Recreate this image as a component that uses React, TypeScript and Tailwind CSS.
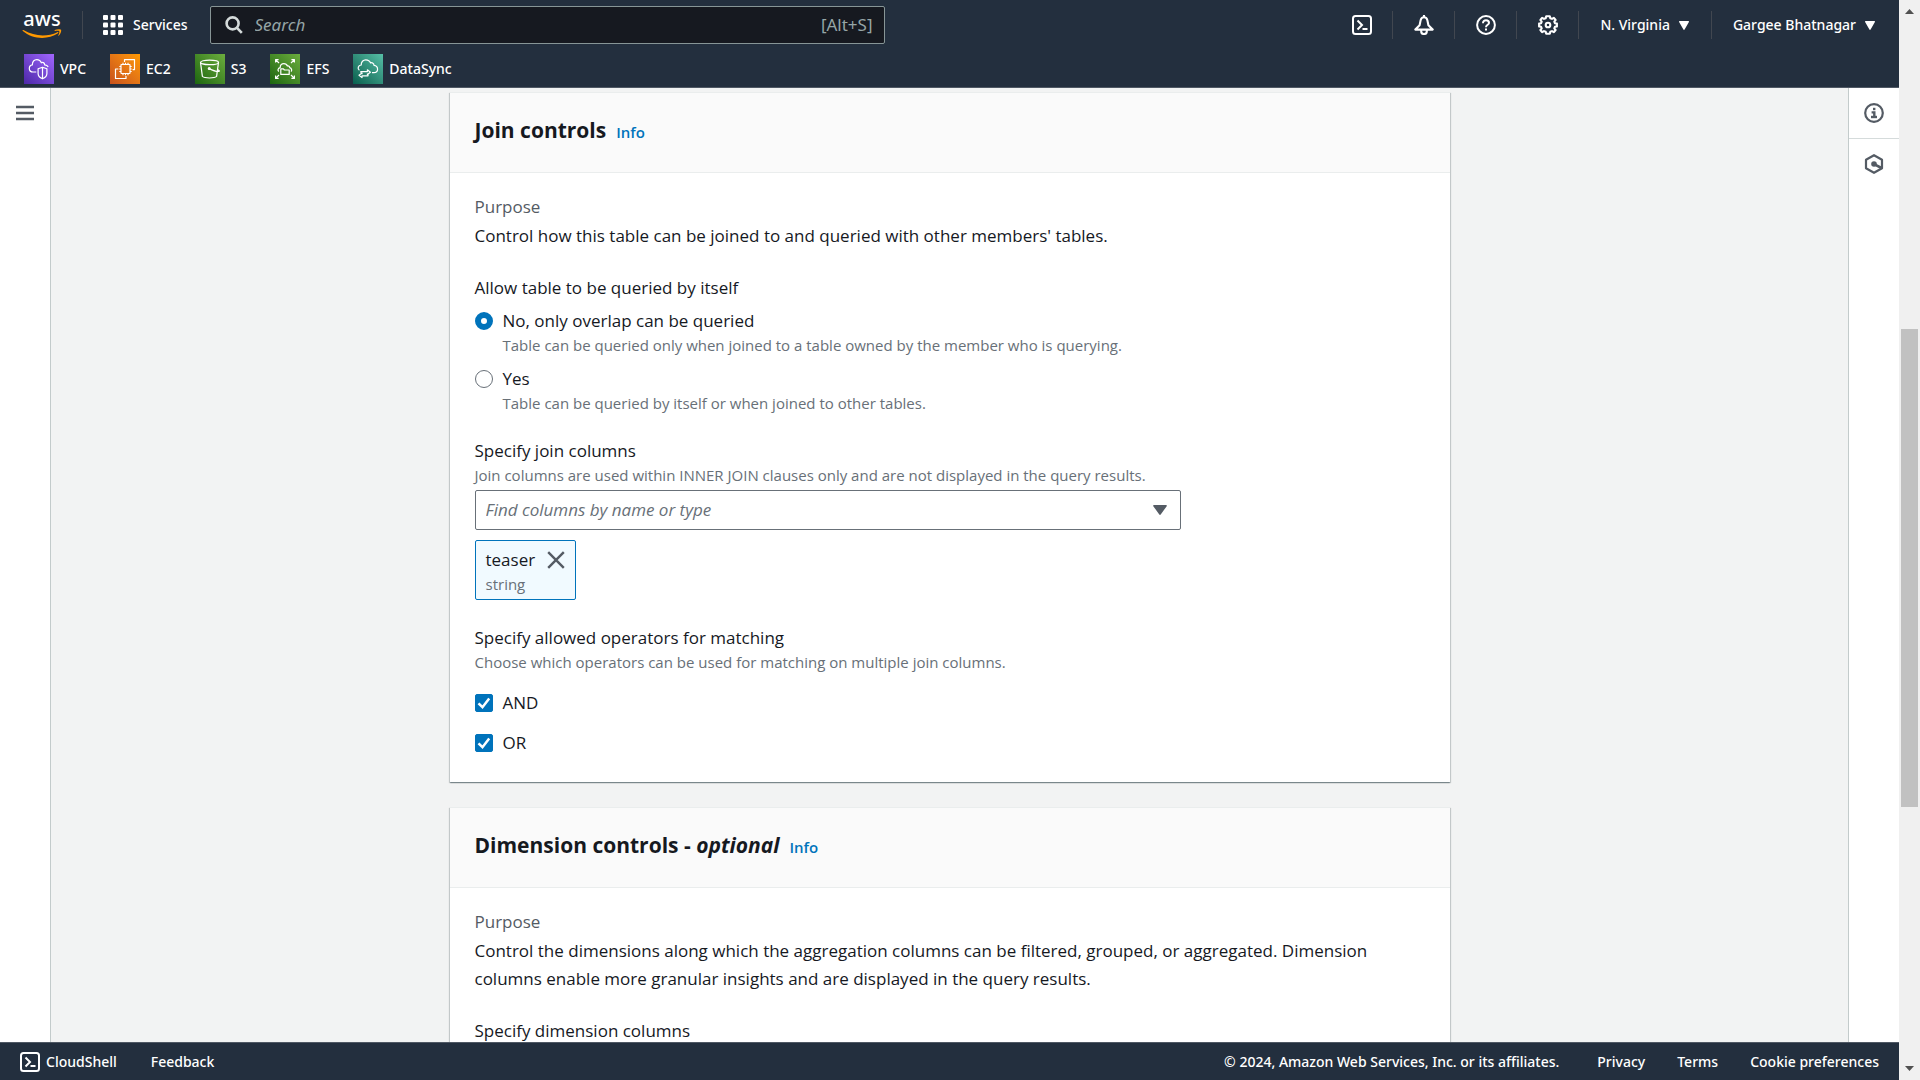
import type { ReactNode } from 'react';

const CHROME_FONT = "font-['Noto_Sans',sans-serif]";
const BODY_FONT = "font-['Open_Sans','Noto_Sans',sans-serif]";

/* ---------- icons ---------- */

function AwsLogo() {
  return (
    <a href="#home" aria-label="AWS home" className="flex w-10 flex-col items-center text-white">
      <span className="text-[20px] leading-4 font-medium">aws</span>
      <svg viewBox="0 0 40 10" className="mt-0.5 h-[10px] w-10" fill="none" aria-hidden="true">
        <path d="M0.6 1.2C0.9 0.8 1.4 0.9 1.9 1.3C12.4 7.6 25.6 7.9 35.3 3.2C36.2 2.8 36.9 3.7 36 4.3C25.5 11.2 10.3 10.2 0.8 2C0.5 1.8 0.4 1.5 0.6 1.2Z" fill="#ff9900" />
        <path d="M32.8 1C34.9 0 38.6 0 39.1 0.8C39.6 1.8 38.6 5.2 36.8 6.8C36.5 7.1 36.2 6.9 36.3 6.5C36.9 5 37.7 2.9 37.3 2.2C36.8 1.5 34.5 1.7 33 1.9C32.5 1.9 32.3 1.3 32.8 1Z" fill="#ff9900" />
      </svg>
    </a>
  );
}

function GridIcon() {
  return (
    <svg viewBox="0 0 20 20" className="size-5" fill="currentColor" aria-hidden="true">
      {[0, 7.5, 15].map((y) =>
        [0, 7.5, 15].map((x) => <rect key={`${x}-${y}`} x={x} y={y} width="5" height="5" rx="1" />),
      )}
    </svg>
  );
}

function SearchIcon() {
  return (
    <svg viewBox="0 0 18 18" className="size-[18px] shrink-0 text-[#d5dbdb]" fill="none" stroke="currentColor" strokeWidth="2.6" aria-hidden="true">
      <circle cx="7.6" cy="7.4" r="6" />
      <path d="M12 11.8L16.8 16.8" />
    </svg>
  );
}

function ShellIcon() {
  return (
    <svg viewBox="0 0 20 20" className="size-5" fill="none" stroke="currentColor" strokeWidth="2" aria-hidden="true">
      <rect x="1" y="1" width="18" height="18" rx="2.5" />
      <path d="M5.5 5.5L10 10L5.5 14.5" />
      <path d="M10.5 14H15.5" />
    </svg>
  );
}

function BellIcon() {
  return (
    <svg viewBox="0 0 20 20" className="size-5" fill="none" stroke="currentColor" strokeWidth="2.1" strokeLinejoin="round" aria-hidden="true">
      <path d="M1.3 14.6L5.6 10.2L6.6 5.4C7 3.4 8.2 2.3 10 2.3C11.8 2.3 13 3.4 13.4 5.4L14.4 10.2L18.7 14.6Z" />
      <path d="M10 0V2.4" />
      <path d="M7.2 14.8V16.2C7.2 17.9 8.4 19 10 19C11.6 19 12.8 17.9 12.8 16.2V14.8" />
    </svg>
  );
}

function HelpIcon() {
  return (
    <svg viewBox="0 0 20 20" className="size-5" fill="none" stroke="currentColor" strokeWidth="2" aria-hidden="true">
      <circle cx="10" cy="10" r="8.9" />
      <path d="M7 8.2C7 6.4 8.3 5.3 10 5.3C11.7 5.3 13 6.4 13 7.9C13 9.7 10 9.8 10 12.2" />
      <path d="M10 13.4V15.6" />
    </svg>
  );
}

function GearIcon() {
  return (
    <svg viewBox="0 0 20 20" className="size-5" fill="none" stroke="currentColor" strokeWidth="2.1" strokeLinejoin="round" aria-hidden="true">
      <path d="M8.2 1.2H11.8L12.3 3.2L14 3.9L15.9 2.8L17.6 5L16.3 6.6L16.9 8.2L18.9 8.6V11.4L16.9 11.8L16.3 13.4L17.6 15L15.9 17.2L14 16.1L12.3 16.8L11.8 18.8H8.2L7.7 16.8L6 16.1L4.1 17.2L2.4 15L3.7 13.4L3.1 11.8L1.1 11.4V8.6L3.1 8.2L3.7 6.6L2.4 5L4.1 2.8L6 3.9L7.7 3.2Z" />
      <circle cx="10" cy="10" r="2.3" />
    </svg>
  );
}

function Caret() {
  return (
    <svg viewBox="0 0 10 9" className="h-[9px] w-[10px] shrink-0" fill="currentColor" aria-hidden="true">
      <path d="M0.6 0H9.4C10 0 10.1 0.5 9.9 0.9L5.6 8.5C5.3 9.1 4.7 9.1 4.4 8.5L0.1 0.9C-0.1 0.5 0 0 0.6 0Z" />
    </svg>
  );
}

function MenuIcon() {
  return (
    <svg viewBox="0 0 18 16" className="h-4 w-[18px]" stroke="currentColor" strokeWidth="2.4" aria-hidden="true">
      <path d="M0 2H18M0 8H18M0 14H18" />
    </svg>
  );
}

function InfoCircleIcon() {
  return (
    <svg viewBox="0 0 20 20" className="size-5" fill="none" stroke="currentColor" strokeWidth="2.2" aria-hidden="true">
      <circle cx="10" cy="10" r="8.8" />
      <path d="M9 6H11.4" strokeWidth="2.4" />
      <path d="M7.6 9.4H10.3V14" strokeWidth="2.4" />
      <path d="M7 14H13" strokeWidth="2.4" />
    </svg>
  );
}

function HexIcon() {
  return (
    <svg viewBox="0 0 20 20" className="size-5" fill="none" stroke="currentColor" strokeWidth="2.2" strokeLinejoin="round" aria-hidden="true">
      <path d="M10 1.2L18 5.7V14.3L10 18.8L2 14.3V5.7Z" />
      <circle cx="10" cy="10" r="2.8" fill="currentColor" stroke="none" />
      <path d="M10.5 10.3L17.5 14" strokeWidth="2.6" />
    </svg>
  );
}

function CloseIcon() {
  return (
    <svg viewBox="0 0 18 18" className="size-[18px]" stroke="currentColor" strokeWidth="2.4" aria-hidden="true">
      <path d="M1.2 1.2L16.8 16.8M16.8 1.2L1.2 16.8" />
    </svg>
  );
}

function Glyph({ children }: { children: ReactNode }) {
  return (
    <svg viewBox="0 0 30 30" className="size-[30px]" fill="none" stroke="white" strokeWidth="1.2" strokeLinejoin="round" aria-hidden="true">
      {children}
    </svg>
  );
}

const favorites: { name: string; tile: string; glyph: ReactNode }[] = [
  {
    name: 'VPC',
    tile: 'from-[#4d27a8] to-[#a166ff]',
    glyph: (
      <>
        <path d="M12.3 18H9.2C6.8 18 5.3 16.4 5.3 14.4C5.3 12.2 6.8 11 8.4 10.8C8.2 7.6 10.2 5.6 12.8 5.6C15 5.6 16.6 6.8 17.3 8.8C18.5 7.9 20.6 8.6 20.7 10.9C22.4 11.1 23.6 11.8 24.2 13" />
        <path d="M18.5 13.2L22.9 14.8V19.4C22.9 22 21.2 23.6 18.5 24.8C15.8 23.6 14.1 22 14.1 19.4V14.8ZM18.5 13.2V24.8" />
      </>
    ),
  },
  {
    name: 'EC2',
    tile: 'from-[#c8511b] to-[#ff9900]',
    glyph: (
      <>
        <path d="M14.5 8V5.6H24.5V15.6H22.6M8.4 15H5.5V24.5H16V22" />
        <rect x="11" y="10.5" width="9" height="9" rx="0.5" />
        <path d="M13 8.8V10.5M15.5 8.8V10.5M18 8.8V10.5M13 19.5V21.2M15.5 19.5V21.2M18 19.5V21.2M9.3 12.5H11M9.3 15H11M9.3 17.5H11M20 12.5H21.7M20 15H21.7M20 17.5H21.7" />
      </>
    ),
  },
  {
    name: 'S3',
    tile: 'from-[#1b660f] to-[#6cae3e]',
    glyph: (
      <>
        <ellipse cx="14.5" cy="8.4" rx="9" ry="2.2" />
        <path d="M5.5 8.4L7.4 22.4C9.8 24.5 19.2 24.5 21.6 22.4L23.5 8.4" />
        <path d="M14.2 14.6C17.5 16.3 21.5 17.8 24 17.4C24.9 17 24 16.2 22.6 15.4" />
        <circle cx="14.2" cy="14.4" r="0.9" />
      </>
    ),
  },
  {
    name: 'EFS',
    tile: 'from-[#1b660f] to-[#6cae3e]',
    glyph: (
      <>
        <path d="M9 9L5.6 5.6M5.6 8.6V5.6H8.6M21 9L24.4 5.6M21.4 5.6H24.4V8.6M9 21L5.6 24.4M5.6 21.4V24.4H8.6M21 21L24.4 24.4M24.4 21.4V24.4H21.4" />
        <path d="M8.8 17.6C7.4 16.6 7.8 14.2 10.2 13.6C10.2 10.8 12 9.6 13.9 9.6C15.8 9.6 16.9 10.6 17.4 12C18.8 11.6 19.6 12.6 19.7 13.7C21.8 14.3 22.2 16.6 21 17.6" />
        <path d="M10.8 20.4V14.8H13.4L14.4 16H19.2V20.4Z" />
      </>
    ),
  },
  {
    name: 'DataSync',
    tile: 'from-[#055f4e] to-[#56c0a7]',
    glyph: (
      <>
        <path d="M6.4 16.2C4.2 14.8 5 11.4 8.2 11C8 8 10.2 5.8 12.8 5.8C15.2 5.8 16.8 7 17.6 9C19.2 8.2 21 9.4 21 11.3C25.8 12 25.8 18.4 20.8 18.6H19" />
        <path d="M7.8 18.8V17.6H14.4V15.8L17.4 18.2L14.4 20.4V19.4M15 20.6V21.8H9V23.6L6 21.2L9 19V20.2" />
      </>
    ),
  },
];

/* ---------- page chrome ---------- */

function IconButton({ label, children }: { label: string; children: ReactNode }) {
  return (
    <button aria-label={label} className="flex h-7 w-[62px] items-center justify-center border-r border-[#414750]">
      {children}
    </button>
  );
}

function TopBar() {
  return (
    <header className={`shrink-0 border-b border-[#4f5864] bg-[#232f3e] pb-[3px] text-sm font-medium text-white ${CHROME_FONT}`}>
      <div className="flex h-[50px] items-center pr-6 pl-[22px]">
        <AwsLogo />
        <span className="mx-5 h-7 w-px bg-[#414750]" />
        <button className="mr-[22px] flex items-center gap-[10px]">
          <GridIcon />
          Services
        </button>
        <label className="flex h-[38px] w-full max-w-[675px] items-center gap-3 rounded-xs border border-[#879596] bg-[#161920] pr-[11px] pl-[14px]">
          <SearchIcon />
          <input
            type="search"
            aria-label="Search"
            placeholder="Search"
            className="min-w-0 flex-1 bg-transparent text-[17px] font-normal outline-none placeholder:text-[#95a5a6] placeholder:italic"
          />
          <span className="text-[17px] font-normal text-[#95a5a6]">[Alt+S]</span>
        </label>
        <div className="ml-auto flex items-center">
          <IconButton label="CloudShell"><ShellIcon /></IconButton>
          <IconButton label="Notifications"><BellIcon /></IconButton>
          <IconButton label="Help"><HelpIcon /></IconButton>
          <IconButton label="Settings"><GearIcon /></IconButton>
          <button className="flex h-7 items-center gap-[9px] border-r border-[#414750] pr-[22px] pl-[21px] whitespace-nowrap">
            N. Virginia <Caret />
          </button>
          <button className="flex h-7 items-center gap-[9px] pl-[21px] whitespace-nowrap">
            Gargee Bhatnagar <Caret />
          </button>
        </div>
      </div>
      <nav className="flex items-center gap-6 pt-1 pl-6">
        {favorites.map((f) => (
          <a key={f.name} href={`#${f.name}`} className="flex items-center gap-[6px]">
            <span className={`bg-gradient-to-tr ${f.tile}`}>
              <Glyph>{f.glyph}</Glyph>
            </span>
            {f.name}
          </a>
        ))}
      </nav>
    </header>
  );
}

function Footer() {
  return (
    <footer className={`flex h-[38px] shrink-0 items-center border-t border-[#4f5864] bg-[#232f3e] px-5 text-sm font-medium text-white ${CHROME_FONT}`}>
      <button className="flex items-center gap-[6px]">
        <ShellIcon />
        CloudShell
      </button>
      <a href="#feedback" className="ml-[34px]">Feedback</a>
      <span className="mr-[6px] ml-auto">© 2024, Amazon Web Services, Inc. or its affiliates.</span>
      <nav className="flex gap-8 pl-8">
        <a href="#privacy">Privacy</a>
        <a href="#terms">Terms</a>
        <a href="#cookies">Cookie preferences</a>
      </nav>
    </footer>
  );
}

function Scrollbar() {
  return (
    <div className="flex w-[21px] shrink-0 flex-col bg-[#f0f0f0] px-[2px] text-[#505050]" aria-hidden="true">
      <svg viewBox="0 0 17 22" className="h-[22px]" fill="currentColor">
        <path d="M4 14L8.5 9L13 14Z" />
      </svg>
      <span className="grow-[307]" />
      <span className="grow-[478] bg-[#c1c1c1]" />
      <span className="grow-[252]" />
      <svg viewBox="0 0 17 21" className="h-[21px]" fill="currentColor">
        <path d="M4 7L8.5 12L13 7Z" />
      </svg>
    </div>
  );
}

/* ---------- form pieces ---------- */

function Card({ title, children }: { title: ReactNode; children: ReactNode }) {
  return (
    <section className="w-full max-w-[1000px] border-t border-[#eaeded] bg-white shadow-[0_1px_1px_0_rgba(0,28,36,0.3),1px_1px_1px_0_rgba(0,28,36,0.15),-1px_1px_1px_0_rgba(0,28,36,0.15)]">
      <div className="flex items-baseline gap-[10px] border-b border-[#eaeded] bg-[#fafafa] px-[25px] pt-5 pb-[25px]">
        <h2 className="text-[21px] leading-[34px] font-bold">{title}</h2>
        <a href="#info" className="text-[15px] leading-5 font-semibold text-[#0073bb]">Info</a>
      </div>
      <div className="px-[25px] pt-5 pb-[25px]">{children}</div>
    </section>
  );
}

function Purpose({ children }: { children: ReactNode }) {
  return (
    <div className="mb-6">
      <p className="text-[#545b64]">Purpose</p>
      <p className="mt-px">{children}</p>
    </div>
  );
}

function Hint({ id, children }: { id?: string; children: ReactNode }) {
  return <span id={id} className="block text-[15px] leading-5 text-[#687078]">{children}</span>;
}

function RadioOption({ label, hint, checked }: { label: string; hint: string; checked?: boolean }) {
  return (
    <label className="flex gap-[10px]">
      <input
        type="radio"
        name="query-alone"
        defaultChecked={checked}
        className="mt-[5px] size-[18px] shrink-0 appearance-none rounded-full border border-[#687078] bg-white checked:border-[6px] checked:border-[#0073bb]"
      />
      <span>
        {label}
        <Hint>{hint}</Hint>
      </span>
    </label>
  );
}

function CheckOption({ label }: { label: string }) {
  return (
    <label className="flex items-center gap-[10px]">
      <span className="grid size-[18px] place-items-center">
        <input
          type="checkbox"
          defaultChecked
          className="peer col-start-1 row-start-1 size-[18px] appearance-none rounded-xs border border-[#687078] bg-white checked:border-[#0073bb] checked:bg-[#0073bb]"
        />
        <svg viewBox="0 0 18 18" className="pointer-events-none invisible col-start-1 row-start-1 size-[18px] peer-checked:visible" fill="none" stroke="white" strokeWidth="2.5" aria-hidden="true">
          <path d="M3.5 9.3L7.5 13.2L14.2 4.5" />
        </svg>
      </span>
      {label}
    </label>
  );
}

function JoinControls() {
  return (
    <Card title="Join controls">
      <Purpose>Control how this table can be joined to and queried with other members' tables.</Purpose>

      <fieldset className="mb-6">
        <legend className="mb-[5px]">Allow table to be queried by itself</legend>
        <div className="flex flex-col gap-[10px]">
          <RadioOption
            label="No, only overlap can be queried"
            hint="Table can be queried only when joined to a table owned by the member who is querying."
            checked
          />
          <RadioOption label="Yes" hint="Table can be queried by itself or when joined to other tables." />
        </div>
      </fieldset>

      <div className="mb-6">
        <label htmlFor="join-columns" className="block">Specify join columns</label>
        <Hint id="join-hint">
          Join columns are used within INNER JOIN clauses only and are not displayed in the query results.
        </Hint>
        <div className="mt-[5px] flex h-10 w-full max-w-[706px] items-center rounded-xs border border-[#687078] bg-white pr-[13px] pl-[10px]">
          <input
            id="join-columns"
            type="text"
            aria-describedby="join-hint"
            placeholder="Find columns by name or type"
            className="min-w-0 flex-1 bg-transparent outline-none placeholder:text-[#687078] placeholder:italic"
          />
          <svg viewBox="0 0 14 10" className="h-[10px] w-[14px] text-[#545b64]" fill="currentColor" aria-hidden="true">
            <path d="M1 0H13C13.8 0 14.1 0.6 13.7 1.2L7.7 9.5C7.3 10.1 6.7 10.1 6.3 9.5L0.3 1.2C-0.1 0.6 0.2 0 1 0Z" />
          </svg>
        </div>
        <div className="mt-[10px] flex w-fit gap-3 rounded-xs border border-[#0073bb] bg-[#f1faff] pt-[5px] pr-[10px] pb-[5px] pl-[10px]">
          <span>
            teaser
            <Hint>string</Hint>
          </span>
          <button aria-label="Remove teaser" className="mt-[5px] self-start text-[#545b64]">
            <CloseIcon />
          </button>
        </div>
      </div>

      <fieldset>
        <legend>
          Specify allowed operators for matching
          <Hint>Choose which operators can be used for matching on multiple join columns.</Hint>
        </legend>
        <div className="mt-[17px] flex flex-col gap-3">
          <CheckOption label="AND" />
          <CheckOption label="OR" />
        </div>
      </fieldset>
    </Card>
  );
}

function DimensionControls() {
  return (
    <Card title={<>Dimension controls - <em>optional</em></>}>
      <Purpose>
        Control the dimensions along which the aggregation columns can be filtered, grouped, or aggregated. Dimension
        columns enable more granular insights and are displayed in the query results.
      </Purpose>
      <p>Specify dimension columns</p>
    </Card>
  );
}

export default function App() {
  return (
    <div className={`flex h-screen w-full overflow-hidden text-[17px] leading-7 text-[#16191f] ${BODY_FONT}`}>
      <div className="flex min-w-0 flex-1 flex-col">
        <TopBar />
        <div className="flex min-h-0 flex-1">
          <aside className="w-[51px] shrink-0 border-r border-[#c3cbcb] bg-white">
            <button aria-label="Open navigation" className="flex h-[50px] w-full items-center justify-center text-[#545b64]">
              <MenuIcon />
            </button>
          </aside>
          <main className="flex min-w-0 flex-1 flex-col items-center gap-[25px] overflow-hidden bg-[#f2f3f3] pt-1">
            <JoinControls />
            <DimensionControls />
          </main>
          <aside className="w-[51px] shrink-0 border-l border-[#c3cbcb] bg-white text-[#545b64]">
            <button aria-label="Info panel" className="flex h-[51px] w-full items-center justify-center border-b border-[#d5dbdb]">
              <InfoCircleIcon />
            </button>
            <button aria-label="Tutorials panel" className="flex h-[50px] w-full items-center justify-center">
              <HexIcon />
            </button>
          </aside>
        </div>
        <Footer />
      </div>
      <Scrollbar />
    </div>
  );
}
